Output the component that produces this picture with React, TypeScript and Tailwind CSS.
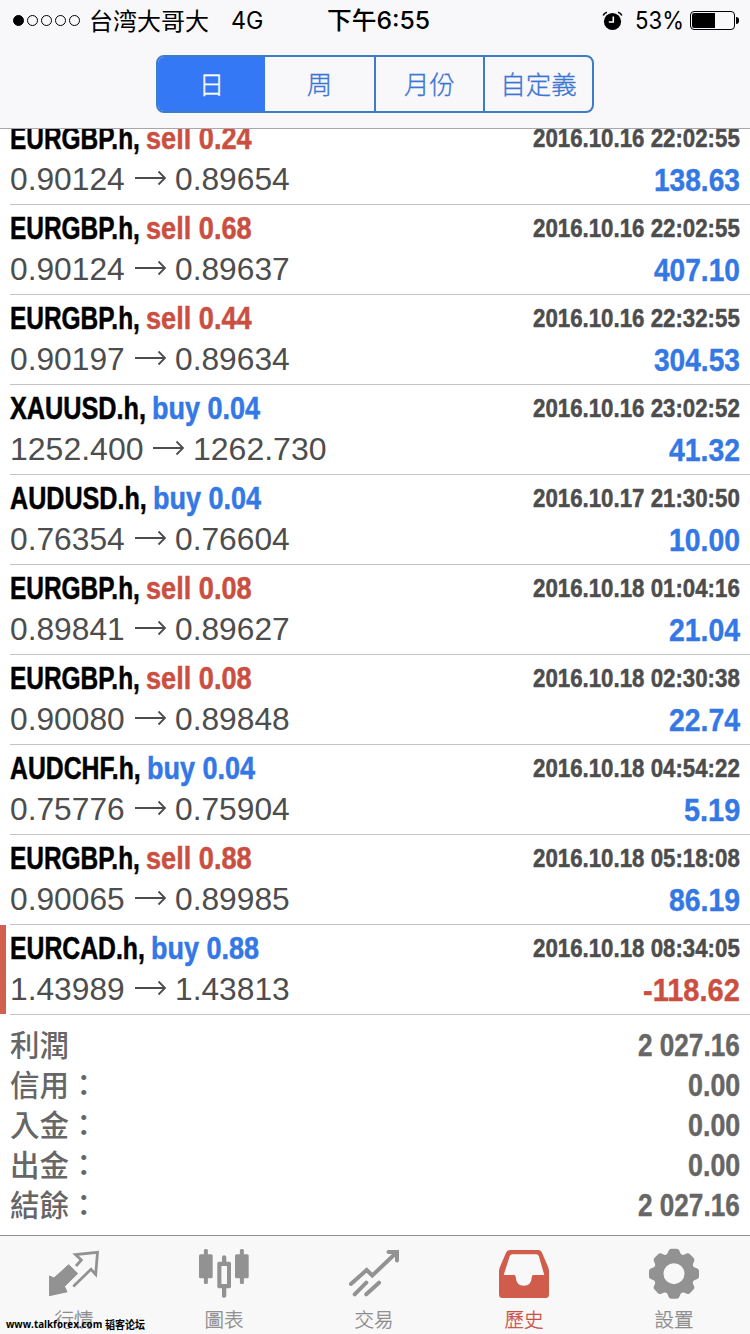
import { ReactNode, useLayoutEffect, useRef, useState } from "react";
import clsx from "clsx";

interface IDeal {
  symbol: string;
  symbolWidth: number;
  side: "buy" | "sell";
  volume: string;
  open: string;
  close: string;
  time: string;
  profit: string;
  profitWidth: number;
}

const deals: IDeal[] = [
  { symbol: "EURGBP.h", symbolWidth: 130, side: "sell", volume: "0.24", open: "0.90124", close: "0.89654", time: "2016.10.16 22:02:55", profit: "138.63", profitWidth: 86 },
  { symbol: "EURGBP.h", symbolWidth: 130, side: "sell", volume: "0.68", open: "0.90124", close: "0.89637", time: "2016.10.16 22:02:55", profit: "407.10", profitWidth: 86 },
  { symbol: "EURGBP.h", symbolWidth: 130, side: "sell", volume: "0.44", open: "0.90197", close: "0.89634", time: "2016.10.16 22:32:55", profit: "304.53", profitWidth: 86 },
  { symbol: "XAUUSD.h", symbolWidth: 136, side: "buy", volume: "0.04", open: "1252.400", close: "1262.730", time: "2016.10.16 23:02:52", profit: "41.32", profitWidth: 71 },
  { symbol: "AUDUSD.h", symbolWidth: 137, side: "buy", volume: "0.04", open: "0.76354", close: "0.76604", time: "2016.10.17 21:30:50", profit: "10.00", profitWidth: 71 },
  { symbol: "EURGBP.h", symbolWidth: 130, side: "sell", volume: "0.08", open: "0.89841", close: "0.89627", time: "2016.10.18 01:04:16", profit: "21.04", profitWidth: 71 },
  { symbol: "EURGBP.h", symbolWidth: 130, side: "sell", volume: "0.08", open: "0.90080", close: "0.89848", time: "2016.10.18 02:30:38", profit: "22.74", profitWidth: 71 },
  { symbol: "AUDCHF.h", symbolWidth: 131, side: "buy", volume: "0.04", open: "0.75776", close: "0.75904", time: "2016.10.18 04:54:22", profit: "5.19", profitWidth: 56 },
  { symbol: "EURGBP.h", symbolWidth: 130, side: "sell", volume: "0.88", open: "0.90065", close: "0.89985", time: "2016.10.18 05:18:08", profit: "86.19", profitWidth: 71 },
  { symbol: "EURCAD.h", symbolWidth: 135, side: "buy", volume: "0.88", open: "1.43989", close: "1.43813", time: "2016.10.18 08:34:05", profit: "-118.62", profitWidth: 97 },
];

const totals = [
  { label: "利潤", value: "2 027.16", width: 102 },
  { label: "信用：", value: "0.00", width: 52 },
  { label: "入金：", value: "0.00", width: 52 },
  { label: "出金：", value: "0.00", width: 52 },
  { label: "結餘：", value: "2 027.16", width: 102 },
];

const periods = ["日", "周", "月份", "自定義"];

// Condenses its text horizontally to the given width
const Condensed = ({
  width,
  className,
  children,
}: {
  width: number;
  className?: string;
  children: ReactNode;
}) => {
  const ref = useRef<HTMLSpanElement>(null);
  const [scale, setScale] = useState(1);

  useLayoutEffect(() => {
    if (ref.current) setScale(width / ref.current.offsetWidth);
  }, [width]);

  return (
    <span className={clsx("block shrink-0 whitespace-nowrap", className)} style={{ width }}>
      <span
        ref={ref}
        className="inline-block origin-left"
        style={{ transform: `scaleX(${scale})` }}
      >
        {children}
      </span>
    </span>
  );
};

const StatusBar = () => (
  <div className="flex h-[40px] items-center pt-0.5 pl-[13px] text-[24px] leading-none text-black font-['Inter','Noto_Sans_CJK_SC',sans-serif]">
    <div className="-mt-px flex w-[76px] gap-[3px]">
      {[0, 1, 2, 3, 4].map((i) => (
        <span
          key={i}
          className={clsx("size-[11px] rounded-full border border-black", i === 0 && "bg-black")}
        />
      ))}
    </div>
    <span className="-mt-[3px] w-[142px] font-['Noto_Sans_CJK_SC',sans-serif]">台湾大哥大</span>
    <Condensed width={32}>4G</Condensed>
    <Condensed width={103} className="ml-[64px] font-medium">下午6:55</Condensed>
    <svg className="-mt-px ml-[172px]" width="22" height="20" viewBox="0 0 22 20">
      <circle cx="10.5" cy="10.5" r="8.6" />
      <path d="M1.2 4.6Q2 2 5 1.2M19.8 4.6Q19 2 16 1.2" fill="none" stroke="#000" strokeWidth="1.6" />
      <path d="M11.3 5.5V11H6.8" fill="none" stroke="#fff" strokeWidth="1.6" />
    </svg>
    <Condensed width={49} className="ml-[11px]">53%</Condensed>
    <div className="ml-[6px] -mt-px flex h-[19px] w-[45px] rounded-[4px] border border-black p-px">
      <div className="w-[23px] rounded-l-[2px] bg-black" />
    </div>
    <div className="-mt-px ml-px h-[7px] w-[3px] rounded-r-full bg-black" />
  </div>
);

const DealRow = ({ deal }: { deal: IDeal }) => {
  const loss = deal.profit.startsWith("-");
  return (
    <div className="flex h-[90px]">
      <div className={clsx("h-[89px] w-[6px]", loss && "bg-[#d2604f]")} />
      <div className="ml-1 flex-1 border-b border-[#c4c4c6] pr-[10px]">
        <div className="flex h-[45px] items-center pt-[2px] text-[31px] font-bold leading-none [-webkit-text-stroke:0.5px]">
          <Condensed width={deal.symbolWidth} className="text-black">{deal.symbol},</Condensed>
          <Condensed
            width={deal.side === "sell" ? 106 : 108}
            className={clsx("ml-[6px]", deal.side === "sell" ? "text-[#cb4f41]" : "text-[#3478e5]")}
          >
            {deal.side} {deal.volume}
          </Condensed>
          <Condensed width={207} className="ml-auto text-[25.5px] text-[#4d4d4d]">{deal.time}</Condensed>
        </div>
        <div className="-mt-px flex h-[40px] items-center text-[32px] leading-none text-[#4d4d4d]">
          <Condensed width={deal.open.length === 8 ? 133 : 115}>{deal.open}</Condensed>
          <svg className="mr-[8px] ml-[10px] -mt-[2px]" width="32" height="18" viewBox="0 0 32 18" fill="none" stroke="#4d4d4d" strokeWidth="1.8">
            <path d="M0 9H30M23.5 2.5L30 9L23.5 15.5" />
          </svg>
          <Condensed width={deal.close.length === 8 ? 133 : 115}>{deal.close}</Condensed>
          <Condensed
            width={deal.profitWidth}
            className={clsx(
              "ml-auto pt-0.5 font-bold [-webkit-text-stroke:0.4px]",
              loss ? "text-[#cb4f41]" : "text-[#3478e5]"
            )}
          >
            {deal.profit}
          </Condensed>
        </div>
      </div>
    </div>
  );
};

const QuotesIcon = () => (
  <svg width="52" height="52" viewBox="0 0 52 52" fill="#929292">
    <path d="M.3 28L5 30L19.7 16.7L28.7 25.5L15.5 38.5L18 43.8L.3 47.7Z" stroke="#929292" strokeLinejoin="round" />
    <path d="M27 18L32.3 12L26.5 6.5L48.5 4.3L46.7 26.5L42 21.3L24.3 38.5" fill="none" stroke="#929292" strokeWidth="2.8" />
  </svg>
);

const ChartIcon = () => (
  <svg width="52" height="52" viewBox="0 0 52 52" fill="#929292">
    <rect x="0" y="6.3" width="13.7" height="24" rx="1.5" />
    <rect x="4.9" y="1" width="4" height="35" rx="1.5" />
    <path d="M20 13.7H23V9Q23 7.3 25.1 7.3T27.3 9V13.7H30.3Q32 13.7 32 15.4V38.6Q32 40.3 30.3 40.3H27.3V48Q27.3 49.7 25.1 49.7T23 48V40.3H20Q18.3 40.3 18.3 38.6V15.4Q18.3 13.7 20 13.7ZM22.4 18V36H28V18Z" fillRule="evenodd" />
    <rect x="36" y="6.3" width="13.7" height="24" rx="1.5" />
    <rect x="40.9" y="1" width="4" height="35" rx="1.5" />
  </svg>
);

const TradeIcon = () => (
  <svg width="52" height="52" viewBox="0 0 52 52" fill="none" stroke="#929292" strokeWidth="4" strokeLinecap="round">
    <path d="M1.9 36L17.7 22L23.3 27.5L47.5 4.5M39.5 4H48V12.5M5.7 46.3L17.3 34.7M17.3 46.3L30 34.7" />
  </svg>
);

const HistoryIcon = () => (
  <svg width="52" height="52" viewBox="0 0 52 52" fill="#d05c4b">
    <path
      d="M11.5 2H39Q42 2 43 4.8L49.3 19.5Q50 21.5 50 24V46.5Q50 50 46.5 50H3.5Q0 50 0 46.5V24Q0 21.5 .7 19.5L7 4.8Q8 2 11.5 2ZM13.5 6.2Q11.5 6.2 10.8 8L4.7 27H15Q16.7 27 16.7 29Q17.3 37.7 24.8 37.7T32.8 29Q32.8 27 34.5 27H45.3L39.8 8Q39.2 6.2 37.2 6.2Z"
      fillRule="evenodd"
    />
  </svg>
);

const SettingsIcon = () => (
  <svg width="52" height="52" viewBox="0 0 52 52">
    <g transform="translate(25 25.7)">
      <circle r="15.5" fill="none" stroke="#929292" strokeWidth="10" />
      {[0, 45, 90, 135, 180, 225, 270, 315].map((angle) => (
        <path
          key={angle}
          d="M-9 -18Q-6.5 -19 -5.8 -22Q-5 -25 -2.5 -25H2.5Q5 -25 5.8 -22Q6.5 -19 9 -18Z"
          fill="#929292"
          transform={`rotate(${angle})`}
        />
      ))}
    </g>
  </svg>
);

const tabs = [
  { label: "行情", icon: <QuotesIcon /> },
  { label: "圖表", icon: <ChartIcon /> },
  { label: "交易", icon: <TradeIcon /> },
  { label: "歷史", icon: <HistoryIcon />, active: true },
  { label: "設置", icon: <SettingsIcon /> },
];

const App = () => {
  return (
    <div className="relative flex h-[1334px] w-[750px] flex-col overflow-hidden bg-white font-['Liberation_Sans','Noto_Sans_CJK_TC',sans-serif]">
      <header className="relative z-10 h-[129px] shrink-0 border-b border-[#a9a7ab] bg-[#f8f8fa]">
        <StatusBar />
        <div className="mt-[15px] ml-[156px] flex h-[58px] w-[438px] overflow-hidden rounded-[8px] border-2 border-[#3d7cc9] text-[#3b76d2]">
          {periods.map((period, i) => (
            <button
              key={period}
              className={clsx(
                "flex items-center justify-center pb-[3px] text-[25.5px] font-light leading-none font-['Noto_Sans_CJK_TC',sans-serif] [-webkit-text-stroke:0.3px]",
                i === 0 ? "w-[108px] bg-[#3478f6] text-white" : "w-[110px] border-[#3d7cc9]",
                i > 1 && "border-l-2"
              )}
            >
              {period}
            </button>
          ))}
        </div>
      </header>

      {/* closed deals, scrolled slightly under the header */}
      <main className="-mt-[14px] flex-1">
        {deals.map((deal, i) => (
          <DealRow key={i} deal={deal} />
        ))}
        <div className="pt-[11px] pr-[10px] pl-[10px] text-[#666]">
          {totals.map((total) => (
            <div key={total.label} className="flex h-10 items-center justify-between leading-none">
              <span className="-mt-[5px] text-[29.5px] font-medium font-['Noto_Sans_CJK_TC',sans-serif]">{total.label}</span>
              <Condensed width={total.width} className="-mt-px text-[31px] font-bold [-webkit-text-stroke:0.4px]">
                {total.value}
              </Condensed>
            </div>
          ))}
        </div>
      </main>

      <nav className="flex h-[99px] shrink-0 border-t border-[#8e8e90] bg-[#f8f8f9]">
        {tabs.map((tab) => (
          <div key={tab.label} className="flex w-[150px] flex-col items-center pt-3">
            {tab.icon}
            <span
              className={clsx(
                "mt-[8px] mr-[2px] text-[19.5px] font-light leading-[22px] font-['Noto_Sans_CJK_TC',sans-serif] [-webkit-text-stroke:0.3px]",
                tab.active ? "text-[#cb4f41]" : "text-[#8a8a8a]"
              )}
            >
              {tab.label}
            </span>
          </div>
        ))}
      </nav>

      <div className="absolute bottom-[3px] left-[6px] flex text-[11px] font-bold leading-[14px] text-black">
        <Condensed width={96} className="font-['Open_Sans',sans-serif]">www.talkforex.com</Condensed>
        <Condensed width={40} className="ml-[3px] font-['Noto_Sans_CJK_SC',sans-serif]">韬客论坛</Condensed>
      </div>
    </div>
  );
};

export default App;
